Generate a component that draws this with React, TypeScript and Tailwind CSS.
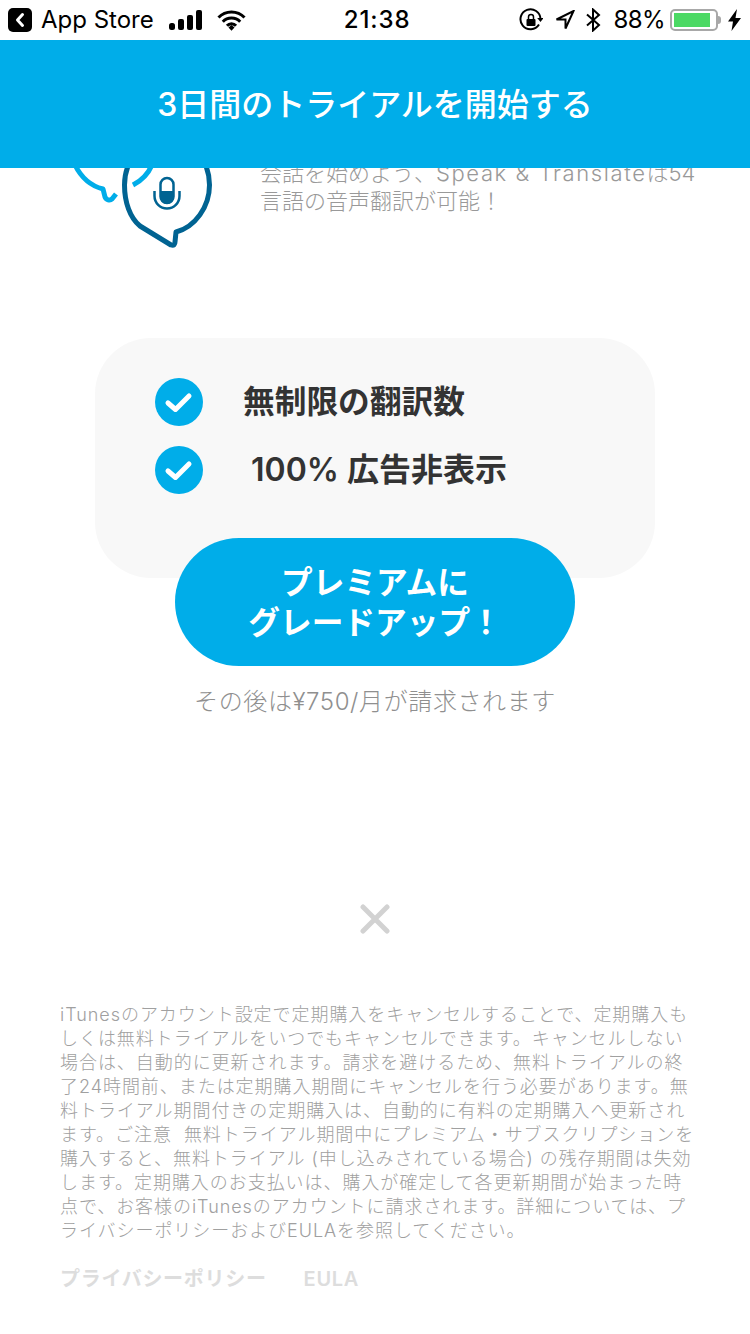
import React from 'react';

const font = 'font-["Inter","Noto_Sans_CJK_JP",sans-serif]';

const StatusBar = () => (
  <div className="flex h-10 items-center bg-white pl-2 text-[24px] leading-none text-black">
    <svg width="24" height="24" viewBox="0 0 24 24">
      <rect width="24" height="24" rx="5" fill="#000" />
      <path d="M14.5 6.5 9.5 12l5 5.5" fill="none" stroke="#fff" strokeWidth="3" strokeLinecap="round" strokeLinejoin="round" />
    </svg>
    <span className="ml-[9px]">App Store</span>
    <svg className="ml-[15px]" width="33" height="20" viewBox="0 0 33 20">
      <rect x="0" y="13" width="6" height="7" rx="2.5" fill="#000" />
      <rect x="9" y="9" width="6" height="11" rx="2" fill="#000" />
      <rect x="18" y="5" width="6" height="15" rx="2" fill="#000" />
      <rect x="27" y="0" width="6" height="20" rx="2" fill="#000" />
    </svg>
    <svg className="ml-[15px]" width="29" height="21" viewBox="0 0 29 21">
      <path d="M1.5 7.5a18 18 0 0 1 26 0M5.8 11.8a12 12 0 0 1 17.4 0M10 15.8a6 6 0 0 1 9 0" fill="none" stroke="#000" strokeWidth="3" />
      <path d="m11.5 17.5 3-2.4 3 2.4-3 3.2z" fill="#000" />
    </svg>
    <span className="ml-[98px] font-medium tracking-[0.9px]">21:38</span>
    <svg className="ml-[109px]" width="24" height="24" viewBox="0 0 24 24">
      <path d="M20 16.5A10 10 0 1 1 21.5 11" fill="none" stroke="#000" strokeWidth="2" />
      <path d="m18.2 10 3.3 4 3-4z" fill="#000" />
      <rect x="7.5" y="11" width="9" height="7" rx="1" fill="#000" />
      <path d="M9.5 11V9a2.5 2.5 0 0 1 5 0v2" fill="none" stroke="#000" strokeWidth="1.5" />
    </svg>
    <svg className="ml-[12px]" width="20" height="20" viewBox="0 0 20 20">
      <path d="M18.5 1 10.5 18.5V9.5H1.5z" fill="none" stroke="#000" strokeWidth="2" />
    </svg>
    <svg className="ml-[11px]" width="15" height="24" viewBox="0 0 15 24">
      <path d="M1 6.5 13 17l-6 5.5v-21L13 7 1 17.5" fill="none" stroke="#000" strokeWidth="2" />
    </svg>
    <span className="ml-[12px] tracking-[-0.5px]">88%</span>
    <div className="ml-[5px] flex h-[22px] w-[48px] items-center rounded-[5px] border-2 border-[#a8a8a8] p-[2px]">
      <div className="h-full w-[36px] bg-[#4cd964]" />
    </div>
    <div className="h-[8px] w-[3px] rounded-r-full bg-[#a8a8a8]" />
    <svg className="ml-[7px]" width="13" height="22" viewBox="0 0 13 22">
      <path d="M9 0 0 12.5h5L3.5 22 13 9H7.5z" fill="#000" />
    </svg>
  </div>
);

const FeatureIcon = () => (
  <svg className="shrink-0" width="160" height="125" viewBox="0 0 160 125">
    {/* light bubble */}
    <path
      d="M10 38C17 52 26 59 38 62L40 70C41 73 45 74 47 72L51 67M68 58C76 54 83 47 87 38"
      fill="none"
      stroke="#00ade9"
      strokeWidth="5"
      strokeLinejoin="round"
    />
    {/* dark bubble */}
    <path
      d="M111 105C130 100 144.5 80 144.5 58C144.5 33 127 13 102 13C77 13 59.5 33 59.5 58C59.5 75 65 91 75 99L106 118C109 119 110 117 110 115z"
      fill="none"
      stroke="#006392"
      strokeWidth="5"
      strokeLinejoin="round"
    />
    {/* mic */}
    <rect x="95.5" y="51" width="13" height="25" rx="6.5" fill="none" stroke="#006392" strokeWidth="2.5" />
    <path d="M95 64H109V70A7 7 0 0 1 95 70z" fill="#006392" />
    <path d="M89.5 64V69A12.5 12.5 0 0 0 114.5 69V64" fill="none" stroke="#006392" strokeWidth="2.5" />
  </svg>
);

const Check = () => (
  <svg className="shrink-0" width="48" height="48" viewBox="0 0 48 48">
    <circle cx="24" cy="24" r="24" fill="#00ade9" />
    <path d="m13 25 7.5 6.5L34 18" fill="none" stroke="#fff" strokeWidth="5" strokeLinecap="round" strokeLinejoin="round" />
  </svg>
);

const legalLines = [
  'iTunesのアカウント設定で定期購入をキャンセルすることで、定期購入も',
  'しくは無料トライアルをいつでもキャンセルできます。キャンセルしない',
  '場合は、自動的に更新されます。請求を避けるため、無料トライアルの終',
  '了24時間前、または定期購入期間にキャンセルを行う必要があります。無',
  '料トライアル期間付きの定期購入は、自動的に有料の定期購入へ更新され',
  'ます。ご注意 \u00a0無料トライアル期間中にプレミアム・サブスクリプションを',
  '購入すると、無料トライアル (申し込みされている場合) の残存期間は失効',
  'します。定期購入のお支払いは、購入が確定して各更新期間が始まった時',
  '点で、お客様のiTunesのアカウントに請求されます。詳細については、プ',
  'ライバシーポリシーおよびEULAを参照してください。',
];

export default function App() {
  return (
    <div className={`h-[1334px] w-[750px] overflow-hidden bg-white ${font}`}>
      <StatusBar />
      <div className="relative z-10 flex h-32 items-center justify-center bg-[#00ade9] pt-0.5 text-[32px] font-medium leading-none text-white">
        3日間のトライアルを開始する
      </div>

      <div className="-mt-[41px] flex pl-[65px]">
        <FeatureIcon />
        <div className="ml-[35px] mt-[32px] w-[440px] text-[22px] font-light leading-[28px] text-[#999999]">
          <p>
            会話を始めよう、<span className="tracking-[1.6px]">Speak &amp; Translate</span>は54
          </p>
          <p>言語の音声翻訳が可能！</p>
        </div>
      </div>

      <div className="mx-[95px] mt-[86px] flex h-[240px] flex-col gap-5 rounded-[56px] bg-[#f8f8f8] pl-[60px] pt-10 text-[32px] font-semibold leading-none text-[#333333]">
        <div className="flex items-center">
          <Check />
          <span className="ml-10 text-[31.7px]">無制限の翻訳数</span>
        </div>
        <div className="flex items-center">
          <Check />
          <span className="ml-12">100% 広告非表示</span>
        </div>
      </div>

      <div className="relative mx-auto -mt-10 flex h-32 w-[400px] items-center justify-center rounded-full bg-[#00ade9] pt-0.5 text-center text-[31.7px] font-semibold leading-10 text-white">
        プレミアムに
        <br />
        グレードアップ！
      </div>

      <p className="mt-[21px] text-center text-[24px] font-light leading-[30px] tracking-[0.6px] text-[#8f8f8f]">その後は¥750/月が請求されます</p>

      <div className="mt-[187px] flex justify-center">
        <svg width="30" height="30" viewBox="0 0 30 30">
          <path d="M3 3 27 27M27 3 3 27" fill="none" stroke="#d2d2d2" strokeWidth="5" strokeLinecap="round" />
        </svg>
      </div>

      <div className="ml-[60px] mt-[69px] whitespace-nowrap text-[18px] font-light leading-6 tracking-[0.95px] text-[#a0a0a0]">
        {legalLines.map((line) => (
          <p key={line}>{line}</p>
        ))}
      </div>

      <div className="mx-[60px] mt-[24px] flex gap-[37px] whitespace-nowrap text-[20px] font-semibold leading-6 tracking-[0.7px] text-[#dddddd]">
        <span>プライバシーポリシー</span>
        <span>EULA</span>
      </div>
    </div>
  );
}
